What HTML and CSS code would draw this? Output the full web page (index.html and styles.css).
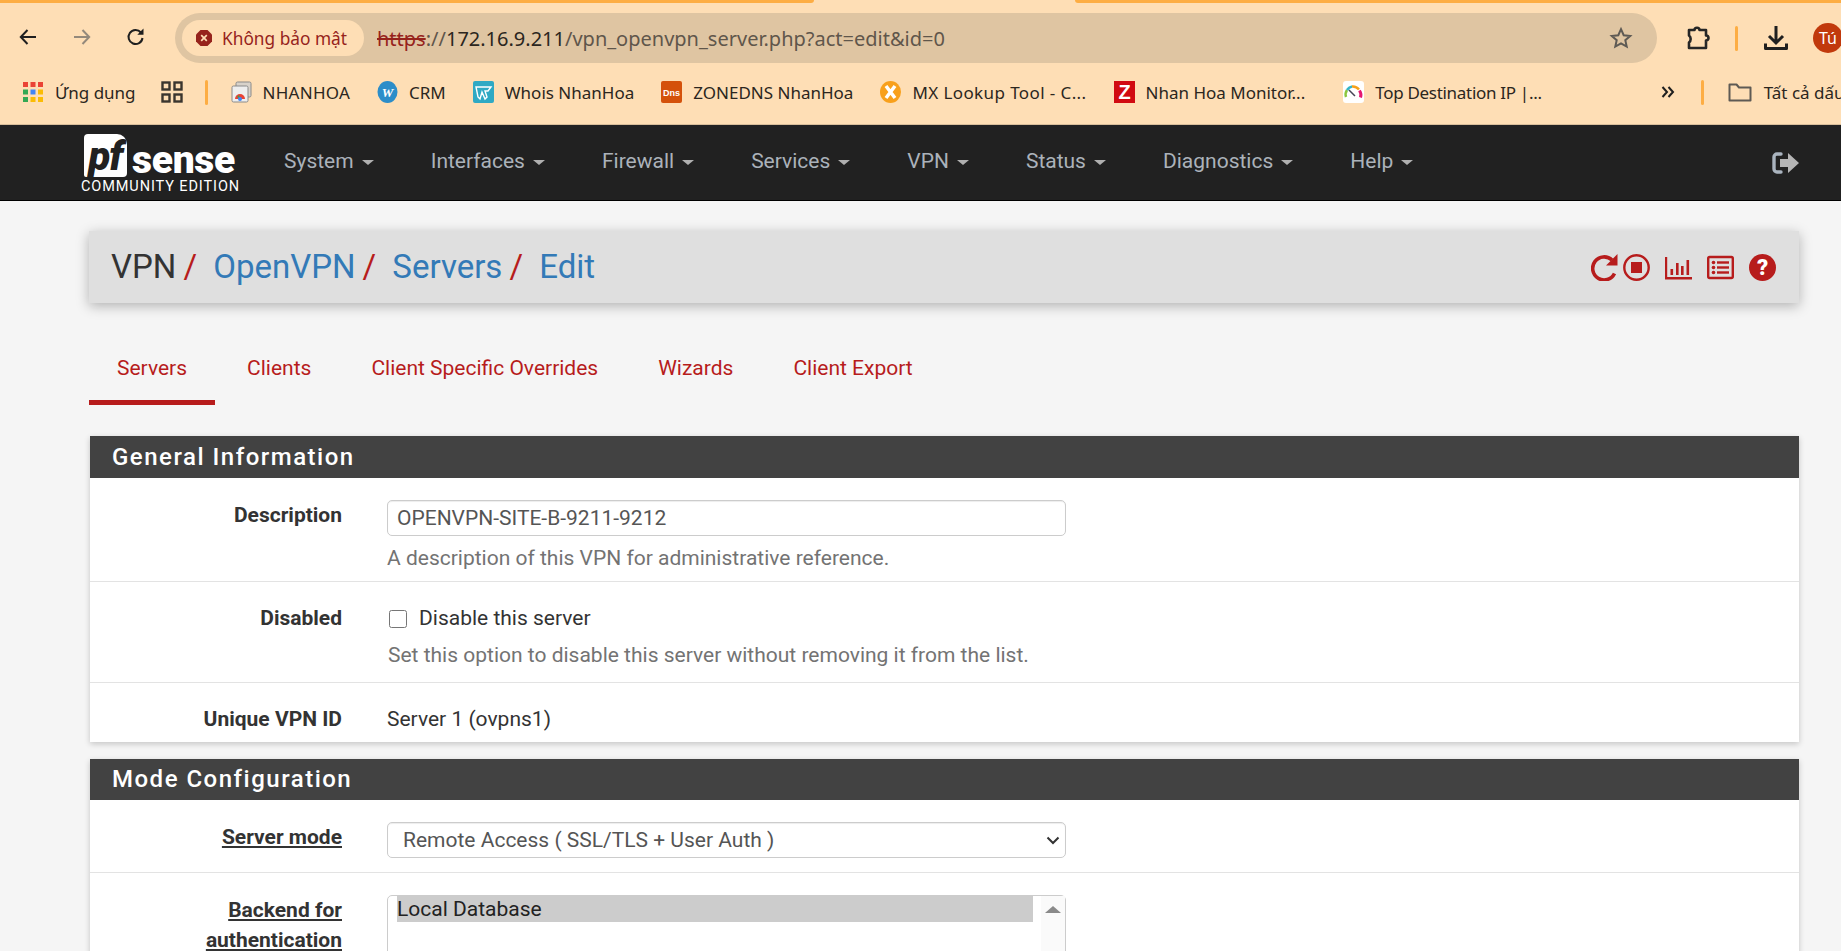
FILE: index.html
```html
<!DOCTYPE html>
<html lang="vi">
<head>
    <meta charset="UTF-8">
    <meta name="viewport" content="width=device-width, initial-scale=1.0">
    <title>pfSense - VPN: OpenVPN: Servers: Edit</title>
    <link rel="stylesheet" href="styles.css">
</head>
<body>

<!-- browser chrome -->
<header class="chrome">
    <div class="tabstrip">
        <div class="strip strip-left"></div>
        <div class="strip-gap"></div>
        <div class="strip strip-right"></div>
    </div>
    <div class="toolbar">
        <button class="tool-btn">
            <svg width="20" height="20" viewBox="0 0 20 20"><path d="M18 10H3M9.500 3 2.800 10l6.700 7" fill="none" stroke="#1f1f1f" stroke-width="2"/></svg>
        </button>
        <button class="tool-btn">
            <svg width="20" height="20" viewBox="0 0 20 20"><path d="M2 10h15M10.500 3l6.700 7-6.700 7" fill="none" stroke="#94897b" stroke-width="2"/></svg>
        </button>
        <button class="tool-btn">
            <svg width="20" height="20" viewBox="0 0 20 20"><path d="M16.500 11a7 7 0 1 1-1.600-5.500" fill="none" stroke="#1f1f1f" stroke-width="2"/><path d="M17.500 1.500v6.200h-6.200z" fill="#1f1f1f"/></svg>
        </button>
        <div class="omnibox">
            <div class="chip">
                <svg width="18" height="18" viewBox="0 0 18 18"><path d="M5.500 1h7L17 5.500v7L12.500 17h-7L1 12.500v-7z" fill="#96231c"/><path d="M6.200 6.200l5.600 5.600M11.800 6.200l-5.600 5.600" stroke="#fedeb5" stroke-width="1.700"/></svg>
                <span>Không bảo mật</span>
            </div>
            <div class="url"><span class="scheme">https</span><span class="url-dim">://</span>172.16.9.211<span class="url-dim">/vpn_openvpn_server.php?act=edit&amp;id=0</span></div>
            <svg class="star" width="24" height="24" viewBox="0 0 24 24"><path d="M12 3.200l2.700 6 6.500.7-4.900 4.300 1.400 6.400L12 17.300l-5.700 3.300 1.400-6.400-4.900-4.300 6.500-.7z" fill="none" stroke="#5e5a54" stroke-width="2"/></svg>
        </div>
        <svg class="ext-icon" width="26" height="26" viewBox="0 0 26 26"><path d="M4 5h5.500a2.500 2.200 0 0 1 5 0H21v5.500a2.500 2.500 0 0 1 0 5V23H4v-5.500a4.500 4.500 0 0 0 0-7z" fill="none" stroke="#262626" stroke-width="2.600" stroke-linejoin="round"/></svg>
        <div class="bar-sep sep-top"></div>
        <svg class="dl-icon" width="26" height="26" viewBox="0 0 26 26"><path d="M13 1v16M6 11l7 7 7-7" fill="none" stroke="#1f1f1f" stroke-width="3"/><path d="M2.500 18.500v5h21v-5" fill="none" stroke="#1f1f1f" stroke-width="3" stroke-linejoin="round"/></svg>
        <div class="avatar">Tú</div>
    </div>
    <div class="bookmarks">
        <svg class="apps" width="20" height="20" viewBox="0 0 20 20">
            <rect x="0" y="0" width="5" height="5" fill="#ea4335"/><rect x="7.500" y="0" width="5" height="5" fill="#ea4335"/><rect x="15" y="0" width="5" height="5" fill="#ea4335"/>
            <rect x="0" y="7.500" width="5" height="5" fill="#34a853"/><rect x="7.500" y="7.500" width="5" height="5" fill="#4285f4"/><rect x="15" y="7.500" width="5" height="5" fill="#fbbc04"/>
            <rect x="0" y="15" width="5" height="5" fill="#34a853"/><rect x="7.500" y="15" width="5" height="5" fill="#fbbc04"/><rect x="15" y="15" width="5" height="5" fill="#fbbc04"/>
        </svg>
        <span class="bm-text bm-apps">Ứng dụng</span>
        <svg class="grid-icon" width="22" height="22" viewBox="0 0 22 22" fill="none" stroke="#3a352e" stroke-width="2.400"><rect x="1.500" y="1.500" width="7" height="7"/><rect x="13.500" y="1.500" width="7" height="7"/><rect x="1.500" y="13.500" width="7" height="7"/><rect x="13.500" y="13.500" width="7" height="7"/></svg>
        <div class="bar-sep sep-bm"></div>
        <a class="bm bm-first">
            <svg width="21" height="22" viewBox="0 0 21 22"><rect x="5" y="1" width="15" height="15" rx="1.500" fill="#d8d2ca" stroke="#8a8a8a"/><rect x="1" y="5" width="16" height="16" rx="1.500" fill="#eee" stroke="#8a8a8a"/><path d="M4 18a5 5 0 0 1 10 0z" fill="#ea4335"/><path d="M9 18l-3-2 2-2z" fill="#34a853"/><circle cx="9" cy="18" r="2" fill="#4285f4"/></svg>
            <span class="bm-text wide">NHANHOA</span>
        </a>
        <a class="bm">
            <svg width="21" height="22" viewBox="0 0 21 22"><ellipse cx="10.500" cy="11" rx="10" ry="11" fill="#2c8dc9"/><text x="10.500" y="16" text-anchor="middle" class="fav-w">W</text></svg>
            <span class="bm-text">CRM</span>
        </a>
        <a class="bm">
            <svg width="21" height="22" viewBox="0 0 21 22"><rect width="21" height="22" rx="2" fill="#2fa9c4"/><path d="M3 6h15l-3 4h-3l2 6-2 2-3-7-2 7-2-2z" fill="none" stroke="#fff" stroke-width="1.400"/></svg>
            <span class="bm-text">Whois NhanHoa</span>
        </a>
        <a class="bm">
            <svg width="21" height="22" viewBox="0 0 21 22"><rect width="21" height="22" rx="2" fill="#d4510b"/><text x="10.500" y="15" text-anchor="middle" class="fav-dns">Dns</text></svg>
            <span class="bm-text">ZONEDNS NhanHoa</span>
        </a>
        <a class="bm">
            <svg width="21" height="22" viewBox="0 0 21 22"><ellipse cx="10.500" cy="11" rx="10.500" ry="11" fill="#f8a01c"/><path d="M6 5l9 12M15 5L6 17" stroke="#fff" stroke-width="3.500"/></svg>
            <span class="bm-text wider">MX Lookup Tool - C...</span>
        </a>
        <a class="bm">
            <svg width="21" height="22" viewBox="0 0 21 22"><rect width="21" height="22" fill="#d10a11"/><text x="10.500" y="18" text-anchor="middle" class="fav-z">Z</text></svg>
            <span class="bm-text">Nhan Hoa Monitor...</span>
        </a>
        <a class="bm bm-top">
            <svg width="21" height="22" viewBox="0 0 21 22"><rect width="21" height="22" rx="3" fill="#fff"/><path d="M3 16a8 8 0 0 1 1-7" fill="none" stroke="#8cc63f" stroke-width="2.500"/><path d="M4 9a8 8 0 0 1 5-3.500" fill="none" stroke="#33b5c9" stroke-width="2.500"/><path d="M9 5.500a8 8 0 0 1 7 3" fill="none" stroke="#f7a11a" stroke-width="2.500"/><path d="M16.500 9.500a8 8 0 0 1 1 7" fill="none" stroke="#e6176f" stroke-width="3"/><path d="M6 9l6 6" stroke="#445" stroke-width="1.500"/></svg>
            <span class="bm-text narrow">Top Destination IP |...</span>
        </a>
        <svg class="more" width="14" height="14" viewBox="0 0 14 14"><path d="M1.500 2l4.500 5-4.500 5M7.500 2l4.500 5-4.500 5" fill="none" stroke="#1f1f1f" stroke-width="2"/></svg>
        <div class="bar-sep sep-more"></div>
        <svg class="folder" width="24" height="20" viewBox="0 0 24 20"><path d="M1.500 2.500h7l2.500 3h11.500v13h-21z" fill="none" stroke="#5e5a54" stroke-width="2" stroke-linejoin="round"/></svg>
        <span class="bm-text bm-all">Tất cả dấu trang</span>
    </div>
</header>

<!-- pfSense nav -->
<nav class="navbar">
    <div class="logo">
        <div class="logo-top"><span class="logo-pf">pf</span><span class="logo-sense">sense</span></div>
        <div class="logo-sub">COMMUNITY EDITION</div>
    </div>
    <ul class="menu">
        <li>System</li>
        <li>Interfaces</li>
        <li>Firewall</li>
        <li>Services</li>
        <li>VPN</li>
        <li>Status</li>
        <li>Diagnostics</li>
        <li>Help</li>
    </ul>
    <svg class="logout" width="28" height="24" viewBox="0 0 28 24"><path d="M9 3H5a3 3 0 0 0-3 3v12a3 3 0 0 0 3 3h4" fill="none" stroke="#aab4bf" stroke-width="3.400" stroke-linecap="round"/><path d="M8 8h8V2l11 10-11 10v-6H8z" fill="#b5b5b5"/></svg>
</nav>

<main class="content">
    <div class="breadcrumb-bar">
        <h1 class="crumbs">
            <span>VPN</span><i>/</i>
            <a>OpenVPN</a><i>/</i>
            <a>Servers</a><i>/</i>
            <a>Edit</a>
        </h1>
        <div class="crumb-icons">
            <svg width="27" height="27" viewBox="0 0 27 27"><path d="M23.500 19.500A11.500 11.500 0 1 1 21 6" fill="none" stroke="#b71c1c" stroke-width="3.600"/><path d="M26.500 0v11.500H15z" fill="#b71c1c"/></svg>
            <svg class="icon-stop" width="27" height="27" viewBox="0 0 27 27"><circle cx="13.500" cy="13.500" r="12.200" fill="none" stroke="#b71c1c" stroke-width="2.400"/><rect x="8" y="8" width="11" height="11" fill="#b71c1c"/></svg>
            <svg class="icon-gap" width="27" height="27" viewBox="0 0 27 27" fill="#b71c1c"><path d="M0 3h2.200v20H27v2.400H0z"/><rect x="5.500" y="15" width="2.600" height="6"/><rect x="11" y="9" width="2.600" height="12"/><rect x="16" y="12" width="2.600" height="9"/><rect x="21.500" y="6" width="2.600" height="15"/></svg>
            <svg class="icon-gap" width="27" height="27" viewBox="0 0 27 27"><rect x="1.200" y="3" width="24.600" height="21" rx="1.500" fill="none" stroke="#b71c1c" stroke-width="2.400"/><g fill="#b71c1c"><circle cx="6.500" cy="8.500" r="1.800"/><circle cx="6.500" cy="13.500" r="1.800"/><circle cx="6.500" cy="18.500" r="1.800"/><rect x="10" y="7.300" width="12" height="2.400"/><rect x="10" y="12.300" width="12" height="2.400"/><rect x="10" y="17.300" width="12" height="2.400"/></g></svg>
            <svg class="icon-gap" width="27" height="27" viewBox="0 0 27 27"><circle cx="13.500" cy="13.500" r="13.500" fill="#b71c1c"/><text x="13.500" y="21" text-anchor="middle" class="icon-q">?</text></svg>
        </div>
    </div>

    <ul class="tabs">
        <li class="active">Servers</li>
        <li>Clients</li>
        <li>Client Specific Overrides</li>
        <li>Wizards</li>
        <li>Client Export</li>
    </ul>

    <section class="panel">
        <h2 class="panel-title">General Information</h2>
        <div class="row row-desc">
            <label class="row-label">Description</label>
            <div class="row-body">
                <input class="field" type="text" value="OPENVPN-SITE-B-9211-9212">
                <p class="help help-desc">A description of this VPN for administrative reference.</p>
            </div>
        </div>
        <div class="row row-check">
            <label class="row-label">Disabled</label>
            <div class="row-body">
                <label class="check"><input type="checkbox"> Disable this server</label>
                <p class="help help-check">Set this option to disable this server without removing it from the list.</p>
            </div>
        </div>
        <div class="row row-static">
            <label class="row-label">Unique VPN ID</label>
            <div class="row-body">Server 1 (ovpns1)</div>
        </div>
    </section>

    <section class="panel panel-cut">
        <h2 class="panel-title">Mode Configuration</h2>
        <div class="row row-select">
            <label class="row-label"><u>Server mode</u></label>
            <div class="row-body select-wrap">
                <select class="field field-select">
                    <option>Remote Access ( SSL/TLS + User Auth )</option>
                </select>
                <svg class="chevron" width="14" height="9" viewBox="0 0 14 9"><path d="M1.500 1.500 7 7l5.500-5.500" fill="none" stroke="#333" stroke-width="2"/></svg>
            </div>
        </div>
        <div class="row row-list">
            <label class="row-label"><u>Backend for</u><br><u>authentication</u></label>
            <div class="row-body">
                <div class="listbox">
                    <div class="options"><div class="option-on">Local Database</div></div>
                    <div class="scroll"><div class="scroll-up"></div></div>
                </div>
            </div>
        </div>
    </section>
</main>

</body>
</html>
```

FILE: styles.css
```css
html, body {
    margin: 0;
    height: 951px;
    overflow: hidden;
}
body {
    font-family: Roboto, sans-serif;
    font-size: 21px;
    line-height: 25px;
    color: #333;
    background-color: #f5f5f5;
}

/* browser chrome */
.chrome {
    height: 124px;
    background-color: #fedeb5;
    border-bottom: 1px solid #d8bd9a;
    font-family: "Noto Sans", sans-serif;
    overflow: hidden;
}
.tabstrip {
    display: flex;
    height: 3px;
}
.strip {
    background-color: #fdad43;
}
.strip-left {
    width: 814px;
    border-radius: 0 0 6px 0;
}
.strip-gap {
    width: 261px;
}
.strip-right {
    flex: 1;
    border-radius: 0 0 0 6px;
}
.toolbar {
    display: flex;
    align-items: center;
    height: 50px;
    margin-top: 10px;
    padding-left: 1px;
}
.tool-btn {
    flex: none;
    width: 54px;
    height: 36px;
    padding: 0;
    background: none;
    border: none;
}
.omnibox {
    flex: none;
    display: flex;
    align-items: center;
    width: 1482px;
    height: 50px;
    margin-left: 12px;
    background-color: #dfc5a2;
    border-radius: 25px;
}
.chip {
    display: flex;
    align-items: center;
    gap: 9px;
    box-sizing: border-box;
    width: 182px;
    height: 36px;
    margin-left: 7px;
    padding-left: 13px;
    background-color: #fedeb5;
    border-radius: 18px;
    color: #96231c;
    font-size: 17.3px;
    white-space: nowrap;
}
.url {
    margin-left: 13px;
    font-size: 20px;
    color: #2b2620;
    white-space: nowrap;
}
.url-dim {
    color: #5f564b;
}
.scheme {
    color: #96231c;
    text-decoration: line-through;
}
.star {
    margin-left: auto;
    margin-right: 24px;
}
.ext-icon {
    flex: none;
    margin-left: 28px;
}
.bar-sep {
    flex: none;
    width: 3px;
    background-color: #fdad43;
    border-radius: 2px;
}
.sep-top {
    height: 25px;
    margin-left: 24px;
}
.dl-icon {
    flex: none;
    margin-left: 25px;
}
.avatar {
    flex: none;
    width: 30px;
    height: 30px;
    margin-left: 24px;
    border-radius: 50%;
    background-color: #c1390c;
    color: #fff;
    font-size: 16px;
    line-height: 30px;
    text-align: center;
}
.bookmarks {
    display: flex;
    align-items: center;
    height: 26px;
    margin-top: 16px;
    padding-left: 23px;
    white-space: nowrap;
}
.bm {
    display: flex;
    flex: none;
    align-items: center;
    gap: 11px;
    margin-left: 27px;
}
.bm-first {
    margin-left: 23px;
}
.bm-top {
    margin-left: 38px;
}
.bm-text {
    flex: none;
    font-size: 17px;
    color: #2b2620;
}
.wide {
    letter-spacing: 0.25px;
}
.wider {
    letter-spacing: 0.4px;
}
.narrow {
    letter-spacing: -0.3px;
}
.apps {
    flex: none;
}
.bm-apps {
    margin-left: 12px;
}
.grid-icon {
    flex: none;
    margin-left: 25px;
}
.sep-bm {
    height: 25px;
    margin-left: 22px;
}
.more {
    flex: none;
    margin-left: 119px;
}
.sep-more {
    height: 25px;
    margin-left: 26px;
}
.folder {
    flex: none;
    margin-left: 24px;
}
.bm-all {
    margin-left: 12px;
}
.fav-w {
    font: italic bold 13px "Liberation Serif", serif;
    fill: #fff;
}
.fav-dns {
    font: bold 9px "Liberation Sans", sans-serif;
    fill: #fff;
}
.fav-z {
    font: bold 20px "Liberation Sans", sans-serif;
    fill: #fff;
}

/* pfSense nav */
.navbar {
    display: flex;
    align-items: center;
    height: 75px;
    padding-left: 81px;
    background-color: #212121;
    border-bottom: 1px solid #000;
}
.logo {
    flex: none;
    width: 160px;
    padding-top: 3px;
    color: #fff;
}
.logo-top {
    display: flex;
    height: 43px;
    margin-left: 3px;
}
.logo-pf {
    flex: none;
    box-sizing: border-box;
    width: 43px;
    height: 43px;
    padding-top: 3px;
    background-color: #fff;
    border-radius: 4px 10px 4px 2px;
    color: #212121;
    font: italic 900 40px/40px Roboto, sans-serif;
    letter-spacing: -1px;
    text-align: center;
}
.logo-sense {
    margin: 7px 0 0 5px;
    font: 900 39px/38px Roboto, sans-serif;
    letter-spacing: -0.3px;
}
.logo-sub {
    margin-top: 3px;
    font-size: 14.5px;
    line-height: 14px;
    letter-spacing: 0.9px;
    white-space: nowrap;
}
.menu {
    display: flex;
    gap: 57px;
    margin: 0 0 2px 43px;
    padding: 0;
    list-style: none;
    font-size: 21px;
    color: #abb2ba;
}
.menu li::after {
    content: "";
    display: inline-block;
    margin-left: 8px;
    vertical-align: 3px;
    border-top: 5px solid #b0b0b0;
    border-left: 6px solid transparent;
    border-right: 6px solid transparent;
}
.logout {
    margin-left: auto;
    margin-right: 41px;
}

/* page */
.content {
    padding: 30px 42px 0 90px;
}
.breadcrumb-bar {
    display: flex;
    align-items: center;
    justify-content: space-between;
    height: 72px;
    margin-left: -1px;
    padding: 0 23px 0 22px;
    background-color: #dfdfdf;
    box-shadow: 0 3px 12px rgba(0, 0, 0, 0.28);
    box-sizing: border-box;
}
.crumbs {
    margin: 0;
    font-size: 33px;
    font-weight: 400;
    line-height: 40px;
    color: #333;
}
.crumbs i {
    font-style: normal;
    color: #b71c1c;
    margin: 0 8px 0 7px;
}
.crumbs a {
    color: #337ab7;
}
.crumb-icons {
    display: flex;
}
.icon-stop {
    margin-left: 5px;
}
.icon-gap {
    margin-left: 15px;
}
.icon-q {
    font: 900 22px Roboto, sans-serif;
    fill: #fff;
}
.tabs {
    display: flex;
    gap: 4px;
    margin: 28px 0 31px -1px;
    padding: 0;
    list-style: none;
    color: #b71c1c;
}
.tabs li {
    padding: 25px 28px 24px;
}
.tabs .active {
    padding-bottom: 19px;
    border-bottom: 5px solid #b71c1c;
}
.panel {
    background-color: #fff;
    box-shadow: 0 2px 6px rgba(0, 0, 0, 0.2);
}
.panel-cut {
    margin-top: 17px;
    height: 300px;
}
.panel-title {
    margin: 0;
    height: 42px;
    padding-left: 22px;
    background-color: #424242;
    color: #fff;
    font-size: 24px;
    font-weight: 500;
    line-height: 42px;
    letter-spacing: 1.5px;
}
.panel-cut .panel-title {
    height: 41px;
    line-height: 41px;
}
.row {
    display: grid;
    grid-template-columns: 252px 679px;
    column-gap: 45px;
    border-bottom: 1px solid #e3e3e3;
}
.row-label {
    font-weight: 700;
    text-align: right;
}
.row-desc {
    height: 81px;
    padding-top: 22px;
}
.row-desc .row-label {
    padding-top: 3px;
}
.row-check {
    height: 76px;
    padding-top: 24px;
}
.row-static {
    height: 35px;
    padding-top: 24px;
    border-bottom: none;
}
.row-select {
    height: 50px;
    padding-top: 22px;
}
.row-select .row-label {
    padding-top: 3px;
}
.row-list {
    border-bottom: none;
    padding-top: 22px;
}
.row-list .row-label {
    line-height: 30px;
}
.field {
    display: block;
    box-sizing: border-box;
    width: 100%;
    height: 36px;
    padding: 0 9px;
    background-color: #fff;
    border: 1px solid #ccc;
    border-radius: 5px;
    box-shadow: inset 0 1px 1px rgba(0, 0, 0, 0.075);
    font-family: Roboto, sans-serif;
    font-size: 21px;
    color: #555;
}
.select-wrap {
    position: relative;
}
.field-select {
    appearance: none;
    padding-left: 15px;
}
.chevron {
    position: absolute;
    top: 14px;
    right: 6px;
}
.help {
    margin: 0;
    color: #737373;
}
.help-desc {
    margin-top: 10px;
}
.help-check {
    margin: 12px 0 0 1px;
}
.check {
    display: flex;
    align-items: center;
    gap: 12px;
    margin-left: 2px;
}
.check input {
    width: 18px;
    height: 18px;
    margin: 0;
}
.listbox {
    display: flex;
    height: 120px;
    box-sizing: border-box;
    border: 1px solid #ccc;
    border-radius: 5px;
}
.options {
    flex: 1;
    padding: 0 8px 0 9px;
    color: #222;
}
.option-on {
    height: 25px;
    padding-top: 1px;
    background-color: #ccc;
}
.scroll {
    width: 24px;
    background-color: #fafafa;
}
.scroll-up {
    width: 0;
    margin: 10px auto 0;
    border-bottom: 7px solid #8a8a8a;
    border-left: 8px solid transparent;
    border-right: 8px solid transparent;
}
```
